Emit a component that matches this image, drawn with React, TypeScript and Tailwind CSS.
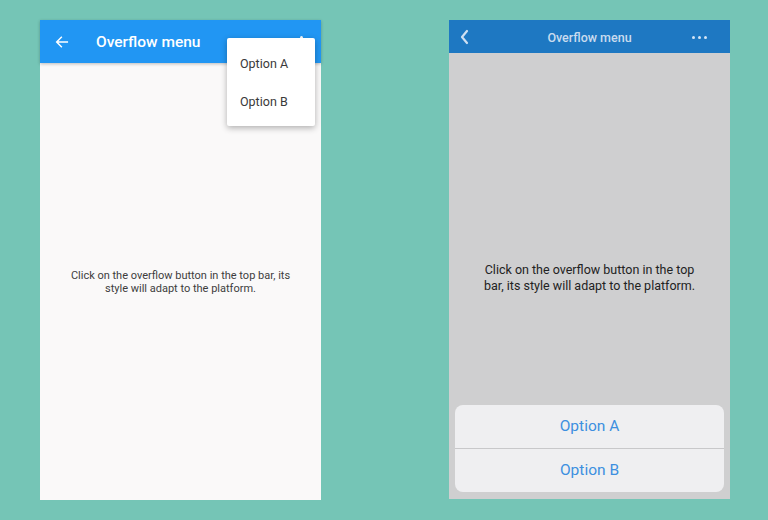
import React from "react";

export default function App() {
  return (
    <div className="w-[768px] h-[520px] bg-[#75c5b6] flex items-start pt-[20px] pl-[40px] gap-[128px] font-['Roboto',sans-serif] overflow-hidden">
      {/* Android phone */}
      <div className="relative w-[281px] h-[480px] bg-[#faf9f9] flex flex-col">
        <div className="h-[43px] bg-[#2196f3] flex items-center shadow-[0_1px_3px_rgba(0,0,0,0.25)] shrink-0 relative">
          <svg className="ml-[14px]" width="16" height="16" viewBox="0 0 24 24" fill="none" stroke="white" strokeWidth="2.2" strokeLinecap="square">
            <path d="M20 12H5M11 5l-7 7 7 7" />
          </svg>
          <span className="ml-[26px] mt-[2px] text-white text-[15.5px] font-medium leading-none">Overflow menu</span>
          <span className="absolute left-[260px] top-[16px] w-[3px] h-[3px] rounded-full bg-white" />
        </div>
        <div className="flex-1 flex items-center justify-center">
          <p className="text-[11px] leading-[13px] text-[#3d3d3d] text-center px-[20px]">
            Click on the overflow button in the top bar, its style will adapt to the platform.
          </p>
        </div>
        <div className="absolute left-[187px] top-[18px] w-[88px] h-[88px] bg-white rounded-[2px] shadow-[0_2px_6px_rgba(0,0,0,0.3)] flex flex-col pt-[7px] pb-[5px]">
          <div className="h-[38px] flex items-center pl-[13px] text-[12.5px] text-[#3a3a3a]">Option A</div>
          <div className="h-[38px] flex items-center pl-[13px] text-[12.5px] text-[#3a3a3a]">Option B</div>
        </div>
      </div>

      {/* iOS phone */}
      <div className="w-[281px] h-[479px] bg-[#cfcfd0] flex flex-col">
        <div className="h-[33px] bg-[#1e78c2] grid grid-cols-[1fr_auto_1fr] items-center shrink-0">
          <svg className="ml-[10px]" width="11" height="16" viewBox="0 0 11 16" fill="none" stroke="#cfe0f2" strokeWidth="2.2" strokeLinecap="round" strokeLinejoin="round">
            <path d="M8 2L3 8l5 6" />
          </svg>
          <span className="text-center text-[#c9dcef] text-[12.5px] font-medium pt-[3px]">Overflow menu</span>
          <div className="justify-self-end mr-[23px] mt-[2px] flex gap-[2.5px]">
            <span className="w-[3.5px] h-[3.5px] rounded-full bg-[#d5e5f5]" />
            <span className="w-[3.5px] h-[3.5px] rounded-full bg-[#d5e5f5]" />
            <span className="w-[3.5px] h-[3.5px] rounded-full bg-[#d5e5f5]" />
          </div>
        </div>
        <div className="flex-1 flex flex-col">
          <div className="flex-1 flex items-start justify-center pt-[209px]">
            <p className="text-[12.5px] leading-[16px] text-[#222] text-center px-[30px]">
              Click on the overflow button in the top bar, its style will adapt to the platform.
            </p>
          </div>
          <div className="mx-[6px] mb-[7px] rounded-[8px] bg-[#efeff1] flex flex-col">
            <div className="h-[44px] flex items-center justify-center text-[15.5px] text-[#3d8fe0] border-b border-[#c8c8ca]">Option A</div>
            <div className="h-[43px] flex items-center justify-center text-[15.5px] text-[#3d8fe0]">Option B</div>
          </div>
        </div>
      </div>
    </div>
  );
}
